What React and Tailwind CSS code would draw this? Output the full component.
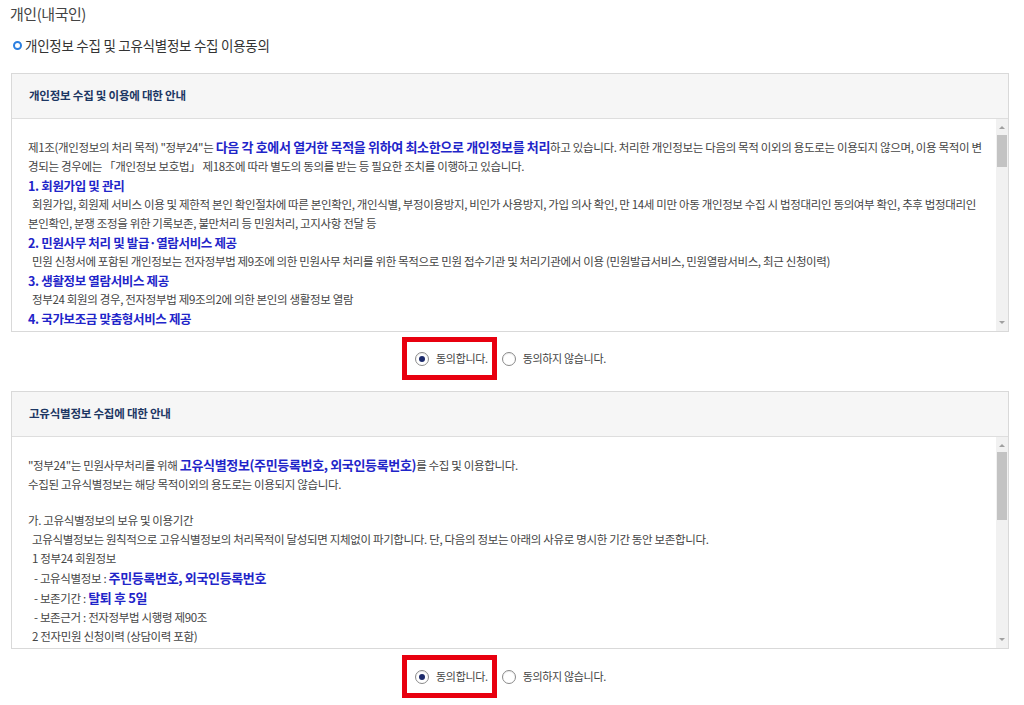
import React from "react";

const B = ({ children }) => (
  <span className="font-bold text-[#1f25c9] text-[13px]">{children}</span>
);

const H = ({ children }) => (
  <div className="font-bold text-[#1f25c9] text-[12.5px]">{children}</div>
);

function Scrollbar({ thumbTop, thumbH }) {
  return (
    <div className="relative w-[12px] h-full bg-[#f1f1f1] shrink-0">
      <div className="absolute left-[3px] top-[7px] w-0 h-0 border-l-[3px] border-r-[3px] border-b-[3px] border-l-transparent border-r-transparent border-b-[#a0a0a0]" />
      <div
        className="absolute left-[1px] w-[10px] bg-[#c3c3c3]"
        style={{ top: thumbTop, height: thumbH }}
      />
      <div className="absolute left-[3px] bottom-[7px] w-0 h-0 border-l-[3px] border-r-[3px] border-t-[3px] border-l-transparent border-r-transparent border-t-[#a0a0a0]" />
    </div>
  );
}

function Radio({ checked }) {
  return (
    <span className="inline-flex items-center justify-center w-[14px] h-[14px] rounded-full border border-[#8a8a8a] bg-white shadow-[inset_0_1px_1px_rgba(0,0,0,0.08)]">
      {checked && <span className="w-[6px] h-[6px] rounded-full bg-[#1c2a6b]" />}
    </span>
  );
}

function Agree() {
  return (
    <div className="flex justify-center items-center">
      <div className="flex items-center h-[43px] border-[5px] border-[#e8000f] pl-[8px] pr-[4px] ml-[-16px]">
        <Radio checked />
        <span className="ml-[7px] text-[11px] text-[#444] tracking-[-0.03em]">동의합니다.</span>
      </div>
      <div className="flex items-center ml-[5px]">
        <Radio />
        <span className="ml-[7px] text-[11px] text-[#444] tracking-[-0.03em]">동의하지 않습니다.</span>
      </div>
    </div>
  );
}

function Panel({ title, height, thumbTop, thumbH, children }) {
  return (
    <div className="ml-[11px] w-[998px] border border-[#d9d9d9]">
      <div className="h-[45px] bg-[#f6f6f6] border-b border-[#dedede] flex items-center pl-[17px] text-[11.5px] font-bold text-[#1d3763] tracking-[-0.02em]">
        {title}
      </div>
      <div className="flex" style={{ height }}>
        <div className="flex-1 overflow-hidden pl-[16px] pt-[18px] text-[11.5px] leading-[19px] text-[#444] tracking-[-0.03em] whitespace-nowrap">
          {children}
        </div>
        <div className="h-full">
          <Scrollbar thumbTop={thumbTop} thumbH={thumbH} />
        </div>
      </div>
    </div>
  );
}

export default function App() {
  return (
    <div
      className="w-[1024px] h-[705px] bg-white overflow-hidden"
      style={{ fontFamily: '"Noto Sans CJK KR", "Noto Sans", sans-serif' }}
    >
      <div className="pl-[10px] pt-[4px] text-[15px] leading-[20px] text-[#444] tracking-[-0.03em]">
        개인(내국인)
      </div>
      <div className="mt-[11px] flex items-center pl-[13px] h-[20px] text-[13.5px] text-[#333] tracking-[-0.02em]">
        <span className="w-[9px] h-[9px] rounded-full border-[2px] border-[#2b7fe0] mr-[3px]" />
        개인정보 수집 및 고유식별정보 수집 이용동의
      </div>

      <div className="mt-[18px]">
        <Panel title="개인정보 수집 및 이용에 대한 안내" height={212} thumbTop={16} thumbH={32}>
          <div>
            제1조(개인정보의 처리 목적) "정부24"는{" "}
            <B>다음 각 호에서 열거한 목적을 위하여 최소한으로 개인정보를 처리</B>
            하고 있습니다. 처리한 개인정보는 다음의 목적 이외의 용도로는 이용되지 않으며, 이용 목적이 변
          </div>
          <div>
            경되는 경우에는 「개인정보 보호법」 제18조에 따라 별도의 동의를 받는 등 필요한 조치를 이행하고 있습니다.
          </div>
          <H>1. 회원가입 및 관리</H>
          <div className="pl-[4px]">
            회원가입, 회원제 서비스 이용 및 제한적 본인 확인절차에 따른 본인확인, 개인식별, 부정이용방지, 비인가 사용방지, 가입 의사 확인, 만 14세 미만 아동 개인정보 수집 시 법정대리인 동의여부 확인, 추후 법정대리인
          </div>
          <div>본인확인, 분쟁 조정을 위한 기록보존, 불만처리 등 민원처리, 고지사항 전달 등</div>
          <H>2. 민원사무 처리 및 발급·열람서비스 제공</H>
          <div className="pl-[4px]">
            민원 신청서에 포함된 개인정보는 전자정부법 제9조에 의한 민원사무 처리를 위한 목적으로 민원 접수기관 및 처리기관에서 이용 (민원발급서비스, 민원열람서비스, 최근 신청이력)
          </div>
          <H>3. 생활정보 열람서비스 제공</H>
          <div className="pl-[4px]">정부24 회원의 경우, 전자정부법 제9조의2에 의한 본인의 생활정보 열람</div>
          <H>4. 국가보조금 맞춤형서비스 제공</H>
        </Panel>
      </div>

      <div className="mt-[5px]">
        <Agree />
      </div>

      <div className="mt-[11px]">
        <Panel title="고유식별정보 수집에 대한 안내" height={211} thumbTop={15} thumbH={68}>
          <div>
            "정부24"는 민원사무처리를 위해 <B>고유식별정보(주민등록번호, 외국인등록번호)</B>를 수집 및 이용합니다.
          </div>
          <div>수집된 고유식별정보는 해당 목적이외의 용도로는 이용되지 않습니다.</div>
          <div className="h-[17px]" />
          <div>가. 고유식별정보의 보유 및 이용기간</div>
          <div className="pl-[4px]">
            고유식별정보는 원칙적으로 고유식별정보의 처리목적이 달성되면 지체없이 파기합니다. 단, 다음의 정보는 아래의 사유로 명시한 기간 동안 보존합니다.
          </div>
          <div className="pl-[4px]">1 정부24 회원정보</div>
          <div className="pl-[6px]">
            - 고유식별정보 : <B>주민등록번호, 외국인등록번호</B>
          </div>
          <div className="pl-[6px]">
            - 보존기간 : <B>탈퇴 후 5일</B>
          </div>
          <div className="pl-[6px]">- 보존근거 : 전자정부법 시행령 제90조</div>
          <div className="pl-[4px]">2 전자민원 신청이력 (상담이력 포함)</div>
          <div className="pl-[6px]">
            - 고유식별정보 : <B>주민등록번호, 외국인등록번호</B>
          </div>
        </Panel>
      </div>

      <div className="mt-[6px]">
        <Agree />
      </div>
    </div>
  );
}
